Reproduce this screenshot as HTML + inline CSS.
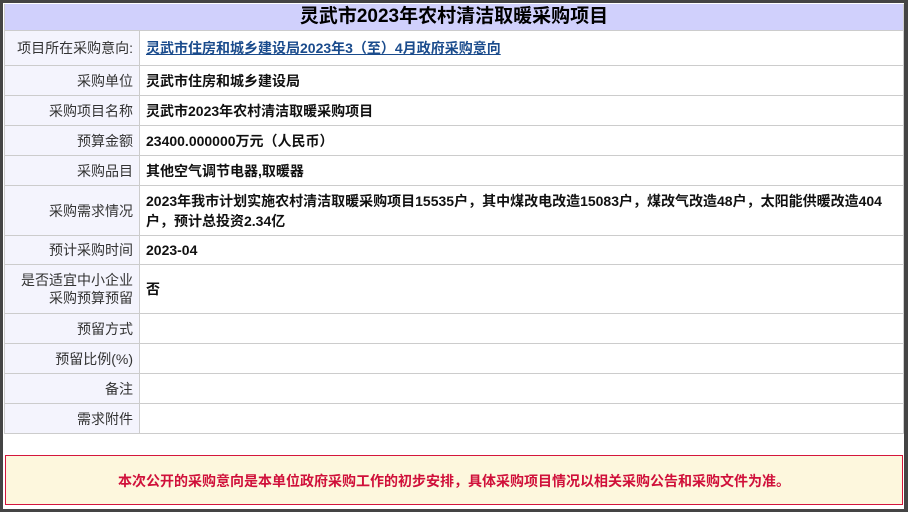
<!DOCTYPE html>
<html><head><meta charset="utf-8"><style>
html,body{margin:0;padding:0;}
body{width:908px;height:511px;position:relative;overflow:hidden;background:#fff;font-family:"Liberation Sans","Noto Sans CJK SC",sans-serif;}
.frame{position:absolute;left:0;top:0;width:901px;height:506px;border:3px solid #444;border-right:4px solid #444;}
table{position:absolute;left:4px;top:4px;width:900px;border-collapse:collapse;font-size:14px;}
td{border:1px solid #ccc;padding:0 6px;}
.t{background:#d0d0fc;text-align:center;font-size:19px;font-weight:bold;height:26px;line-height:26px;padding:0;border-top:0;}
.l{width:124px;background:#f4f4fd;text-align:right;color:#333;padding:0 6px 0 4px;}
.v{font-weight:bold;color:#111;}
a{color:#1a4b8c;text-decoration:underline;}
.n{position:absolute;left:5px;top:455px;width:896px;height:48px;border:1px solid #d4163c;background:#fdf7dd;color:#d0103a;font-weight:bold;font-size:14px;text-align:center;line-height:50px;}
</style></head><body>
<div class="frame"></div>
<table>
<tr><td colspan="2" class="t">灵武市2023年农村清洁取暖采购项目</td></tr>
<tr style="height:35px"><td class="l">项目所在采购意向:</td><td class="v"><a>灵武市住房和城乡建设局2023年3（至）4月政府采购意向</a></td></tr>
<tr style="height:30px"><td class="l">采购单位</td><td class="v">灵武市住房和城乡建设局</td></tr>
<tr style="height:30px"><td class="l">采购项目名称</td><td class="v">灵武市2023年农村清洁取暖采购项目</td></tr>
<tr style="height:30px"><td class="l">预算金额</td><td class="v">23400.000000万元（人民币）</td></tr>
<tr style="height:30px"><td class="l">采购品目</td><td class="v">其他空气调节电器,取暖器</td></tr>
<tr style="height:50px"><td class="l">采购需求情况</td><td class="v" style="line-height:20px">2023年我市计划实施农村清洁取暖采购项目15535户，其中煤改电改造15083户，煤改气改造48户，太阳能供暖改造404户，预计总投资2.34亿</td></tr>
<tr style="height:29px"><td class="l">预计采购时间</td><td class="v">2023-04</td></tr>
<tr style="height:49px"><td class="l" style="line-height:18px">是否适宜中小企业采购预算预留</td><td class="v">否</td></tr>
<tr style="height:30px"><td class="l">预留方式</td><td class="v"></td></tr>
<tr style="height:30px"><td class="l">预留比例(%)</td><td class="v"></td></tr>
<tr style="height:30px"><td class="l">备注</td><td class="v"></td></tr>
<tr style="height:30px"><td class="l">需求附件</td><td class="v"></td></tr>
</table>
<div class="n">本次公开的采购意向是本单位政府采购工作的初步安排，具体采购项目情况以相关采购公告和采购文件为准。</div>
</body></html>
